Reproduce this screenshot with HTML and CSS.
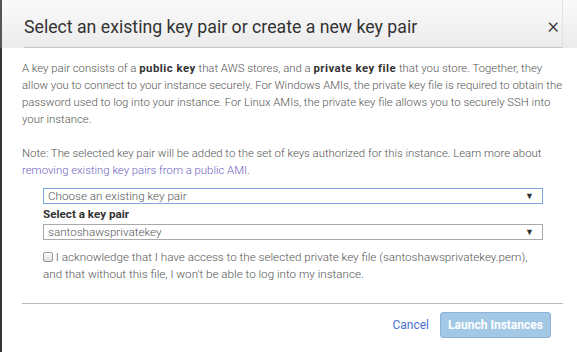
FILE: index.html
```html
<!DOCTYPE html>
<html>
<head>
<meta charset="utf-8">
<link rel="stylesheet" href="styles.css">
</head>
<body>
<div class="modal">
  <div class="header">
    <div class="header-inner">
      <h1 class="title">Select an existing key pair or create a new key pair</h1>
      <span class="close">×</span>
    </div>
  </div>
  <div class="body">
    <p class="para">A key pair consists of a <b>public key</b> that AWS stores, and a <b>private key file</b> that you store. Together, they allow you to connect to your instance securely. For Windows AMIs, the private key file is required to obtain the password used to log into your instance. For Linux AMIs, the private key file allows you to securely SSH into your instance.</p>
    <p class="para note">Note: The selected key pair will be added to the set of keys authorized for this instance. Learn more about <a class="link" href="#">removing existing key pairs from a public AMI</a>.</p>
    <div class="form">
      <div class="select focused"><span>Choose an existing key pair</span><span class="arrow">▼</span></div>
      <div class="label">Select a key pair</div>
      <div class="select"><span>santoshawsprivatekey</span><span class="arrow">▼</span></div>
      <div class="ack"><span class="check"></span> I acknowledge that I have access to the selected private key file (santoshawsprivatekey.pem), and that without this file, I won't be able to log into my instance.</div>
    </div>
    <div class="footer">
      <a class="cancel" href="#">Cancel</a>
      <button class="launch">Launch Instances</button>
    </div>
  </div>
</div>
</body>
</html>
```
FILE: styles.css
```css
html, body {
  margin: 0;
  padding: 0;
  background: #fff;
}
body {
  font-family: Roboto, "Liberation Sans", Arial, sans-serif;
  width: 577px;
  height: 352px;
  overflow: hidden;
}
.modal {
  width: 577px;
  height: 352px;
  display: flex;
  flex-direction: column;
}
.header {
  height: 48px;
  background: linear-gradient(#fafafa, #ebebeb);
  padding-left: 22px;
  padding-right: 14px;
  border-left: 2px solid #555;
  box-sizing: border-box;
  display: flex;
}
.header-inner {
  flex: 1;
  border-bottom: 1px solid #c8c8c8;
  border-right: 1px solid #e2e2e2;
  display: flex;
  align-items: center;
  justify-content: space-between;
}
.title {
  margin: 0;
  font-weight: 400;
  font-size: 17.7px;
  color: #333;
  padding-top: 6px;
}
.close {
  font-size: 22px;
  font-weight: 300;
  color: #333;
  margin-right: 3px;
  padding-top: 4px;
}
.body {
  flex: 1;
  border-left: 2px solid #333;
  padding: 12px 14px 0 20px;
  color: #555;
  font-size: 11.35px;
  font-weight: 300;
  line-height: 17px;
}
.para {
  margin: 0 0 17px 0;
}
.para b {
  font-weight: 700;
  color: #333;
  letter-spacing: 0.5px;
}
.note {
  margin-bottom: 9px;
}
.link {
  color: #6f5fbf;
  text-decoration: none;
}
.form {
  padding-left: 21px;
  padding-right: 20px;
}
.select {
  border: 1px solid #aaa;
  box-sizing: border-box;
  height: 16px;
  display: flex;
  justify-content: space-between;
  align-items: center;
  padding: 0 8px 0 4px;
  color: #555;
  line-height: 14px;
  font-size: 11.65px;
}
.select.focused {
  border-color: #7ea6e0;
}
.arrow {
  font-size: 9px;
  color: #333;
}
.label {
  font-weight: 700;
  color: #333;
  margin: 2px 0 1px 0;
  font-size: 11.65px;
}
.ack {
  margin-top: 9px;
  color: #555;
  font-size: 11.65px;
}
.check {
  display: inline-block;
  width: 8px;
  height: 8px;
  border: 1px solid #999;
  border-radius: 2px;
  background: linear-gradient(#fff, #ddd);
  vertical-align: -1px;
}
.footer {
  margin: 20px 0 0 0;
  border-top: 1px solid #bbb;
  display: flex;
  justify-content: flex-end;
  align-items: center;
  padding-top: 8px;
  padding-right: 12px;
  gap: 11px;
}
.cancel {
  color: #4a6fd0;
  text-decoration: none;
  font-weight: 400;
  font-size: 12px;
}
.launch {
  width: 111px;
  height: 26px;
  border: 1px solid #8db4d8;
  border-radius: 3px;
  background: #a2c8e6;
  color: #fff;
  font-family: Roboto, "Liberation Sans", Arial, sans-serif;
  font-weight: 700;
  font-size: 12px;
  padding: 0;
}
```
